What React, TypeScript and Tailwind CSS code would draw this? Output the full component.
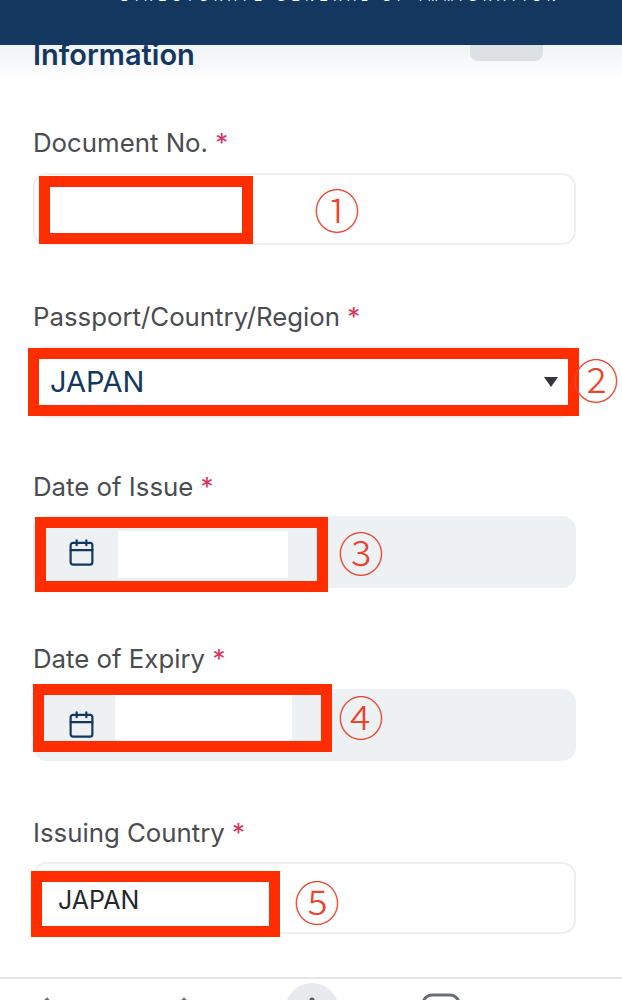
import { Calendar } from "lucide-react";
import type { ReactNode } from "react";

const mark = "absolute border-[11px] border-[#ff2d00]";
const circled = "absolute font-['Noto_Sans_CJK_JP',sans-serif] font-light text-[46px] leading-none text-[#e8452f]";

function Label({ text, className }: { text: string; className: string }) {
  return (
    <div className={`text-[25.8px] leading-[30px] text-[#4a4c50] ${className}`}>
      {text} <span className="text-[#d8345f]">*</span>
    </div>
  );
}

function Box({ disabled, children, className }: { disabled?: boolean; children?: ReactNode; className: string }) {
  return (
    <div
      className={`relative h-[72px] rounded-[14px] border-2 ${
        disabled ? "border-[#eef1f4] bg-[#eef1f4]" : "border-[#eceef0] bg-white"
      } ${className}`}
    >
      {children}
    </div>
  );
}

function DateMark({ className, gap, icon, patch }: { className: string; gap: string; icon: string; patch: string }) {
  return (
    <div className={`${mark} flex items-start bg-[#eef1f4] ${className}`}>
      <Calendar size={29} strokeWidth={1.8} className={`shrink-0 text-[#14375f] ${icon}`} />
      <div className={`bg-white ${gap} ${patch}`} />
    </div>
  );
}

export default function App() {
  return (
    <div className="relative flex h-[1000px] w-[622px] flex-col overflow-hidden bg-white font-['Inter',sans-serif]">
      <header className="relative z-10 h-[45px] shrink-0 overflow-hidden bg-[#14375f] pl-[60px]">
        <div className="-mt-[9px] text-center font-['Liberation_Sans',sans-serif] text-[12px] leading-[12px] tracking-[0.47em] text-white">
          DIRECTORATE GENERAL OF IMMIGRATION
        </div>
      </header>

      <main className="relative flex-1 overflow-hidden">
        <div className="absolute inset-x-0 top-0 h-[36px] bg-gradient-to-b from-[#f0f2f5] to-white" />
        <div className="absolute right-[79px] top-0 h-[16px] w-[73px] rounded-b-[8px] bg-[#dde0e5]" />

        <form className="relative flex flex-col pl-[33px] pr-[46px]">
          <h2 className="h-[30px] text-[29px] font-semibold leading-[20px] text-[#14375f]">Information</h2>

          <Label text="Document No." className="mt-[53px]" />
          <Box className="mt-[15px]">
            <div className={`${mark} left-[4px] top-[1px] h-[68px] w-[214px] bg-white`} />
            <span className={`${circled} left-[279px] top-[10px]`}>①</span>
          </Box>

          <Label text="Passport/Country/Region" className="mt-[57px]" />
          <Box className="mt-[14px]">
            <div className={`${mark} -left-[7px] top-0 flex h-[68px] w-[551px] items-center justify-between bg-white pl-[11px] pr-[10px] text-[29px] text-[#14375f]`}>
              <span>JAPAN</span>
              <span className="h-0 w-0 border-x-[7px] border-t-[10px] border-x-transparent border-t-[#33363a]" />
            </div>
            <span className={`${circled} left-[538px] top-[7px]`}>②</span>
          </Box>

          <Label text="Date of Issue" className="mt-[54px]" />
          <Box disabled className="mt-[14px]">
            <DateMark
              className="left-0 -top-px h-[75px] w-[293px]"
              icon="ml-[21px] mt-[10px]"
              gap="ml-[22px] mt-[3px]"
              patch="h-[47px] w-[170px]"
            />
            <span className={`${circled} left-[303px] top-[10px]`}>③</span>
          </Box>

          <Label text="Date of Expiry" className="mt-[56px]" />
          <Box disabled className="mt-[15px]">
            <DateMark
              className="-left-[2px] -top-[7px] h-[68px] w-[299px]"
              icon="ml-[23px] mt-[15px]"
              gap="ml-[19px]"
              patch="h-[46px] w-[177px]"
            />
            <span className={`${circled} left-[303px] top-px`}>④</span>
          </Box>

          <Label text="Issuing Country" className="mt-[57px]" />
          <Box className="mt-[14px]">
            <div className={`${mark} -left-[4px] top-[7px] h-[66px] w-[249px] bg-white pl-[16px] text-[25px] leading-[36px] text-[#26282c]`}>
              JAPAN
            </div>
            <span className={`${circled} left-[259px] top-[13px]`}>⑤</span>
          </Box>
        </form>
      </main>

      <nav className="relative h-[23px] shrink-0 overflow-hidden border-t-2 border-[#e3e4e6] bg-white">
        <svg width="622" height="21" className="block" fill="none">
          <path d="M44 23 L47 20 L50 23" stroke="#6b6e72" strokeWidth="2.5" />
          <path d="M181 23 L184 20 L187 23" stroke="#6b6e72" strokeWidth="2.5" />
          <circle cx="312" cy="31" r="27" fill="#e8e9ed" />
          <circle cx="312" cy="21" r="2.5" fill="#55585c" />
          <rect x="423" y="16" width="36" height="30" rx="9" stroke="#6b6e72" strokeWidth="3" />
        </svg>
      </nav>
    </div>
  );
}
